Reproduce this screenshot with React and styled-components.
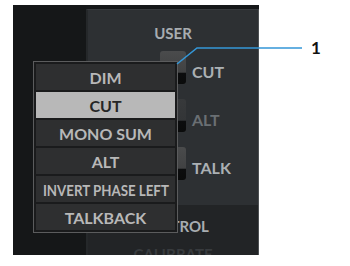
import React from "react";
import styled, { createGlobalStyle } from "styled-components";

const GlobalStyle = createGlobalStyle`
  html, body {
    margin: 0;
    padding: 0;
    background: #ffffff;
  }
  body {
    font-family: "Lato", "Liberation Sans", sans-serif;
  }
`;

const Page = styled.div`
  position: relative;
  width: 350px;
  height: 266px;
  overflow: hidden;
`;

const Frame = styled.div`
  position: relative;
  display: flex;
  width: 246px;
  height: 250px;
  margin: 5px 0 0 13px;
  background: #161819;
  overflow: hidden;
`;

const SideStrip = styled.div`
  width: 73px;
  flex: none;
  background: #151718;
`;

const Panel = styled.div`
  flex: 1;
  display: flex;
  flex-direction: column;
  margin-top: 4px;
  border-left: 2px solid #25282a;
  border-top: 1px solid #383b3e;
  border-right: 1px solid #4d5053;
`;

const UserSection = styled.div`
  height: 195px;
  flex: none;
  background: #2d3033;
  display: flex;
  flex-direction: column;
`;

const ControlSection = styled.div`
  flex: 1;
  background: #222426;
  display: flex;
  flex-direction: column;
  align-items: center;
  padding-top: 13px;
  gap: 12px;
`;

const SectionTitle = styled.div`
  text-align: center;
  font-size: 15px;
  font-weight: 700;
  line-height: 16px;
  color: ${(p) => (p.$faint ? "#383b3e" : "#a8adb1")};
`;

const UserTitle = styled(SectionTitle)`
  padding-top: 15px;
`;

const KeyList = styled.div`
  display: flex;
  flex-direction: column;
  gap: 15px;
  padding: 10px 0 0 72px;
`;

const KeyRow = styled.div`
  display: flex;
  align-items: flex-start;
  gap: 6px;
  height: 33px;
`;

const Key = styled.div`
  width: 26px;
  height: 33px;
  border-radius: 3px;
  background: linear-gradient(
    to bottom,
    ${(p) => (p.$dim ? "#37393b" : "#4a4b4c")} 0%,
    ${(p) => (p.$dim ? "#333537" : "#414243")} 64%,
    #0c0d0e 68%,
    #0a0b0b 100%
  );
`;

const KeyLabel = styled.span`
  padding-top: 12px;
  font-size: 16px;
  font-weight: 700;
  line-height: 18px;
  color: ${(p) => (p.$dim ? "#6a6f73" : "#abb0b4")};
`;

const Menu = styled.div`
  position: absolute;
  left: 20px;
  top: 56px;
  width: 139px;
  border: 1px solid #5b5c5d;
  box-shadow: inset 0 0 0 1px #1a1b1c;
  background: #1a1b1c;
  padding: 2px;
  display: flex;
  flex-direction: column;
  gap: 2px;
`;

const MenuItem = styled.div`
  height: 26px;
  display: flex;
  align-items: center;
  justify-content: center;
  font-size: 16px;
  font-weight: 700;
  color: ${(p) => (p.$active ? "#262626" : "#b8b8b8")};
  background: ${(p) => (p.$active ? "#b8b8b8" : "#2e2f30")};
  white-space: nowrap;
`;

const MenuText = styled.span`
  display: inline-block;
  transform: scaleX(${(p) => p.$squeeze || 1});
`;

const Callout = styled.svg`
  position: absolute;
  left: 0;
  top: 0;
  pointer-events: none;
`;

const CalloutNumber = styled.span`
  position: absolute;
  left: 311px;
  top: 37px;
  font-size: 17px;
  font-weight: 700;
  color: #111;
`;

const keys = [
  { label: "CUT" },
  { label: "ALT", dim: true },
  { label: "TALK" },
];

const menuItems = [
  { label: "DIM" },
  { label: "CUT", active: true },
  { label: "MONO SUM" },
  { label: "ALT" },
  { label: "INVERT PHASE LEFT", squeeze: 0.83 },
  { label: "TALKBACK" },
];

export default function App() {
  return (
    <>
      <GlobalStyle />
      <Page>
        <Frame>
          <SideStrip />
          <Panel>
            <UserSection>
              <UserTitle>USER</UserTitle>
              <KeyList>
                {keys.map((k) => (
                  <KeyRow key={k.label}>
                    <Key $dim={k.dim} />
                    <KeyLabel $dim={k.dim}>{k.label}</KeyLabel>
                  </KeyRow>
                ))}
              </KeyList>
            </UserSection>
            <ControlSection>
              <SectionTitle>CONTROL</SectionTitle>
              <SectionTitle $faint>CALIBRATE</SectionTitle>
            </ControlSection>
          </Panel>
          <Menu>
            {menuItems.map((item) => (
              <MenuItem key={item.label} $active={item.active}>
                <MenuText $squeeze={item.squeeze}>{item.label}</MenuText>
              </MenuItem>
            ))}
          </Menu>
        </Frame>
        <Callout width="350" height="266" viewBox="0 0 350 266">
          <polyline
            points="177,64 197,48 302,48"
            fill="none"
            stroke="#3497d8"
            strokeWidth="1.6"
          />
        </Callout>
        <CalloutNumber>1</CalloutNumber>
      </Page>
    </>
  );
}
